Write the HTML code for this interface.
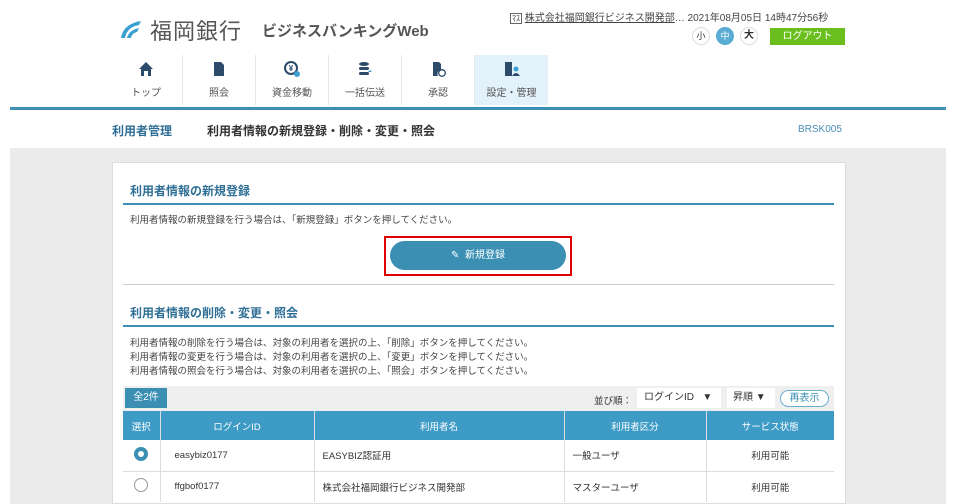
<!DOCTYPE html>
<html><head><meta charset="utf-8"><style>
*{margin:0;padding:0;box-sizing:border-box}
body{width:959px;height:504px;overflow:hidden;background:#fff;font-family:"Liberation Sans","Noto Sans CJK JP",sans-serif;color:#333;position:relative}
.abs{position:absolute}
.nav{position:absolute;top:55px;height:50px;width:73px;text-align:center;font-size:10px;color:#555;border-right:1px solid #e6e6e6}
.nav .ic{display:block;height:16px;margin:6px auto 7px;width:16px}
.t{font-size:9.5px;color:#444;position:absolute;left:130px}
th,td{font-size:9.5px;font-weight:normal;border-right:1px solid #ddd}
</style></head><body>
<svg class="abs" style="left:117px;top:18px" width="26" height="22" viewBox="0 0 26 22"><path d="M4 20 Q6 6 24 3 L22 7 Q10 9 8 20Z" fill="#3aa0d0"/><path d="M10 20 Q12 12 22 10 L20 14 Q15 15 14 20Z" fill="#3aa0d0"/></svg>
<div class="abs" style="left:150px;top:14px;font-size:22px;color:#555;letter-spacing:1px">福岡銀行</div>
<div class="abs" style="left:262px;top:20px;font-size:15px;color:#555;font-weight:bold">ビジネスバンキングWeb</div>
<div class="abs" style="left:510px;top:9px;font-size:10px;color:#444"><span style="border:1px solid #666;font-size:8px;padding:0 1px">ﾏｽ</span> <u>株式会社福岡銀行ビジネス開発部</u>… 2021年08月05日 14時47分56秒</div>
<div class="abs" style="left:692px;top:27px;width:18px;height:18px;border-radius:9px;border:1px solid #ddd;font-size:9px;text-align:center;line-height:16px">小</div>
<div class="abs" style="left:716px;top:27px;width:18px;height:18px;border-radius:9px;background:#5aacd4;color:#fff;font-size:9px;text-align:center;line-height:18px">中</div>
<div class="abs" style="left:740px;top:27px;width:18px;height:18px;border-radius:9px;border:1px solid #ddd;font-size:10px;text-align:center;line-height:16px;font-weight:bold">大</div>
<div class="abs" style="left:770px;top:28px;width:75px;height:17px;background:#6abf1e;color:#fff;font-size:10px;text-align:center;line-height:17px">ログアウト</div>
<div class="nav" style="left:110px"><svg class="ic" viewBox="0 0 16 16"><path d="M8 1 L15 8 H13 V15 H10 V10 H6 V15 H3 V8 H1Z" fill="#2c4a6a"/></svg>トップ</div>
<div class="nav" style="left:183px"><svg class="ic" viewBox="0 0 16 16"><path d="M3 1 H10 L13 4 V15 H3Z" fill="#2c4a6a"/></svg>照会</div>
<div class="nav" style="left:256px"><svg class="ic" viewBox="0 0 16 16"><circle cx="7" cy="7" r="6" fill="none" stroke="#2c4a6a" stroke-width="2"/><text x="7" y="10" font-size="8" text-anchor="middle" fill="#2c4a6a" font-weight="bold">¥</text><circle cx="13" cy="13" r="3" fill="#3aa0d0"/></svg>資金移動</div>
<div class="nav" style="left:329px"><svg class="ic" viewBox="0 0 16 16"><ellipse cx="7" cy="3" rx="5" ry="2" fill="#2c4a6a"/><rect x="2" y="6" width="10" height="3" rx="1.5" fill="#2c4a6a"/><rect x="2" y="11" width="10" height="3" rx="1.5" fill="#2c4a6a"/><path d="M11 11 h4 l-2 -2z" fill="#3aa0d0"/></svg>一括伝送</div>
<div class="nav" style="left:402px"><svg class="ic" viewBox="0 0 16 16"><path d="M3 1 H9 L11 3 V9 A4 4 0 0 0 8 15 H3Z" fill="#2c4a6a"/><circle cx="12" cy="12" r="3.3" fill="none" stroke="#2c4a6a" stroke-width="1.3"/></svg>承認</div>
<div class="nav" style="left:475px;background:#e3f2fa;border:none"><svg class="ic" viewBox="0 0 16 16"><rect x="1" y="1" width="7" height="14" fill="#2c4a6a"/><circle cx="12" cy="8" r="2.5" fill="#3aa0d0"/><path d="M8 15 Q12 9 16 15Z" fill="#2c4a6a"/></svg>設定・管理</div>
<div class="abs" style="left:10px;top:107px;width:936px;height:3px;background:#3d8fb5"></div>
<div class="abs" style="left:112px;top:122px;font-size:12px;font-weight:bold;color:#2f6f95">利用者管理</div>
<div class="abs" style="left:207px;top:122px;font-size:12px;font-weight:bold;color:#333">利用者情報の新規登録・削除・変更・照会</div>
<div class="abs" style="left:798px;top:124px;font-size:10px;color:#4a8db5">BRSK005</div>
<div class="abs" style="left:10px;top:148px;width:936px;height:356px;background:#ebebeb"></div>
<div class="abs" style="left:112px;top:162px;width:734px;height:342px;background:#fff;border:1px solid #ddd"></div>
<div class="abs" style="left:130px;top:182px;font-size:12px;font-weight:bold;color:#2f6f95">利用者情報の新規登録</div>
<div class="abs" style="left:123px;top:203px;width:711px;height:2px;background:#3d8fb5"></div>
<div class="t" style="top:212px">利用者情報の新規登録を行う場合は、「新規登録」ボタンを押してください。</div>
<div class="abs" style="left:384px;top:236px;width:188px;height:40px;border:2px solid #e00000"></div>
<div class="abs" style="left:390px;top:241px;width:176px;height:29px;border-radius:15px;background:#3a8fb3;color:#fff;font-size:10px;text-align:center;line-height:29px">✎ &nbsp;新規登録</div>
<div class="abs" style="left:123px;top:284px;width:711px;height:1px;background:#ccc"></div>
<div class="abs" style="left:130px;top:304px;font-size:12px;font-weight:bold;color:#2f6f95">利用者情報の削除・変更・照会</div>
<div class="abs" style="left:123px;top:325px;width:711px;height:2px;background:#3d8fb5"></div>
<div class="t" style="top:335px">利用者情報の削除を行う場合は、対象の利用者を選択の上、「削除」ボタンを押してください。</div>
<div class="t" style="top:349px">利用者情報の変更を行う場合は、対象の利用者を選択の上、「変更」ボタンを押してください。</div>
<div class="t" style="top:363px">利用者情報の照会を行う場合は、対象の利用者を選択の上、「照会」ボタンを押してください。</div>
<div class="abs" style="left:123px;top:386px;width:711px;height:25px;background:#efefef"></div>
<div class="abs" style="left:125px;top:388px;width:42px;height:20px;background:#3a8fb3;color:#fff;font-size:10px;text-align:center;line-height:20px">全2件</div>
<div class="abs" style="left:594px;top:393px;font-size:9.5px">並び順：</div>
<div class="abs" style="left:637px;top:388px;width:84px;height:20px;background:#fff;font-size:10px;line-height:20px;padding-left:7px">ログインID &nbsp;&nbsp;▼</div>
<div class="abs" style="left:727px;top:388px;width:48px;height:20px;background:#fff;font-size:10px;line-height:20px;padding-left:6px">昇順 ▼</div>
<div class="abs" style="left:780px;top:390px;width:49px;height:17px;border:1px solid #6aaed0;border-radius:9px;background:#fff;color:#3a8fb3;font-size:10px;text-align:center;line-height:15px">再表示</div>
<table class="abs" style="left:123px;top:411px;width:711px;border-collapse:collapse">
<tr style="background:#3d9bc6;color:#fff;height:29px"><th style="width:37px">選択</th><th style="width:154px">ログインID</th><th style="width:250px">利用者名</th><th style="width:142px">利用者区分</th><th style="border-right:none">サービス状態</th></tr>
<tr style="height:31px;border-bottom:1px solid #ddd"><td style="text-align:center"><span style="display:inline-block;width:14px;height:14px;border-radius:7px;border:4px solid #3a8fb3"></span></td><td style="padding-left:14px">easybiz0177</td><td style="padding-left:8px">EASYBIZ認証用</td><td style="padding-left:8px">一般ユーザ</td><td style="text-align:center;border-right:none">利用可能</td></tr>
<tr style="height:31px"><td style="text-align:center"><span style="display:inline-block;width:14px;height:14px;border-radius:7px;border:1px solid #999"></span></td><td style="padding-left:14px">ffgbof0177</td><td style="padding-left:8px">株式会社福岡銀行ビジネス開発部</td><td style="padding-left:8px">マスターユーザ</td><td style="text-align:center;border-right:none">利用可能</td></tr>
</table>
</body></html>
